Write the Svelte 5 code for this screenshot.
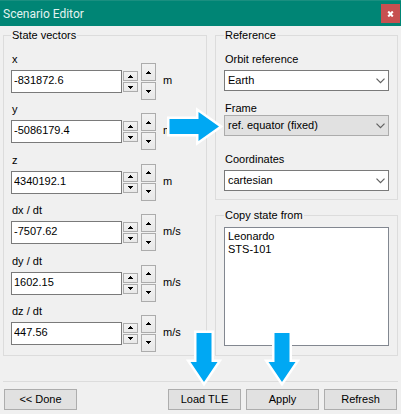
<script>
  let vectors = $state([
    { id: 'x', label: 'x', value: '-831872.6', unit: 'm' },
    { id: 'y', label: 'y', value: '-5086179.4', unit: 'm' },
    { id: 'z', label: 'z', value: '4340192.1', unit: 'm' },
    { id: 'dx', label: 'dx / dt', value: '-7507.62', unit: 'm/s' },
    { id: 'dy', label: 'dy / dt', value: '1602.15', unit: 'm/s' },
    { id: 'dz', label: 'dz / dt', value: '447.56', unit: 'm/s' }
  ]);

  const references = [
    { id: 'orbit', label: 'Orbit reference', value: 'Earth' },
    { id: 'frame', label: 'Frame', value: 'ref. equator (fixed)', marked: true },
    { id: 'coords', label: 'Coordinates', value: 'cartesian' }
  ];

  const vessels = ['Leonardo', 'STS-101'];
</script>

{#snippet spinner(size, name)}
  <span class="spinner {size}">
    <button type="button" aria-label="Increase {name}">
      <svg width="5" height="3" viewBox="0 0 5 3" shape-rendering="crispEdges"><path d="M2 0h1v1h1v1h1v1H0V2h1V1h1z" /></svg>
    </button>
    <button type="button" aria-label="Decrease {name}">
      <svg width="5" height="3" viewBox="0 0 5 3" shape-rendering="crispEdges"><path d="M0 0h5v1H4v1H3v1H2V2H1V1H0z" /></svg>
    </button>
  </span>
{/snippet}

{#snippet downArrow()}
  <svg class="arrow down" width="40" height="58" viewBox="0 0 40 58" aria-hidden="true">
    <path d="M12.5 4h15v29h6L20 53 6.5 33h6z" />
  </svg>
{/snippet}

<div class="window">
  <header>
    <h1>Scenario Editor</h1>
    <button type="button" class="close" aria-label="Close">
      <svg width="7" height="6" viewBox="0 0 7 6"><path d="M1.2 0.5l4.6 5M5.8 0.5l-4.6 5" /></svg>
    </button>
  </header>

  <main>
    <fieldset>
      <legend>State vectors</legend>
      <div class="vectors">
        {#each vectors as v (v.id)}
          <div class="vector">
            <div class="entry">
              <label for={v.id}>{v.label}</label>
              <div class="pair">
                <input id={v.id} type="text" bind:value={v.value} />
                {@render spinner('small', v.label)}
              </div>
            </div>
            {@render spinner('large', v.label)}
            <span class="unit">{v.unit}</span>
          </div>
        {/each}
      </div>
    </fieldset>

    <div class="side">
      <fieldset>
        <legend>Reference</legend>
        <div class="fields">
          {#each references as r (r.id)}
            <div class="field" class:marked={r.marked}>
              <label for={r.id}>{r.label}</label>
              <div class="combo">
                <select id={r.id}><option>{r.value}</option></select>
                <svg class="chevron" width="9" height="6" viewBox="0 0 9 6"><path d="M0.5 0.7l4 4 4-4" /></svg>
                {#if r.marked}
                  <svg class="arrow right" width="58" height="40" viewBox="0 0 58 40" aria-hidden="true">
                    <path d="M4.500 13v15h29v7L54 20.500 33.500 6v7z" />
                  </svg>
                {/if}
              </div>
            </div>
          {/each}
        </div>
      </fieldset>

      <fieldset class="copy">
        <legend>Copy state from</legend>
        <select class="list" multiple size="2" aria-label="Copy state from">
          {#each vessels as vessel}
            <option>{vessel}</option>
          {/each}
        </select>
      </fieldset>
    </div>
  </main>

  <footer>
    <button type="button" class="push done">&lt;&lt; Done</button>
    <div class="slot">
      <button type="button" class="push">Load TLE</button>
      {@render downArrow()}
    </div>
    <div class="slot">
      <button type="button" class="push">Apply</button>
      {@render downArrow()}
    </div>
    <button type="button" class="push">Refresh</button>
  </footer>
</div>

<style>
  :global(body) {
    margin: 0;
    background: #f0f0f0;
  }

  .window,
  .window :is(button, input, select) {
    box-sizing: border-box;
    font-family: 'Liberation Sans', Arial, sans-serif;
    font-size: 11px;
    line-height: 13px;
    color: #000;
  }

  header {
    display: flex;
    align-items: center;
    justify-content: space-between;
    box-sizing: border-box;
    height: 26px;
    padding: 0 1px 0 3px;
    border-top: 1px solid #1a8f80;
    background: #008575;
  }

  h1 {
    margin: 0;
    font: 12px/16px Roboto, 'Open Sans', sans-serif;
    color: #e4f3f1;
  }

  .close {
    display: grid;
    place-items: center;
    width: 19px;
    height: 19px;
    padding: 0;
    border: 0;
    background: #c75050;
  }

  .close path {
    fill: none;
    stroke: #fff;
    stroke-width: 2;
  }

  main {
    display: grid;
    grid-template-columns: 204fr 183fr;
    gap: 8px;
    padding: 3px 3px 0;
  }

  fieldset {
    display: flex;
    flex-direction: column;
    min-width: 0;
    margin: 0;
    padding: 0 8px;
    border: 1px solid #dcdcdc;
  }

  main > fieldset {
    padding: 0 7px;
  }

  legend {
    padding: 0 1px;
  }

  label {
    display: block;
    height: 13px;
    padding-left: 1px;
    white-space: nowrap;
  }

  .vectors {
    flex: 1;
    display: flex;
    flex-direction: column;
    justify-content: space-between;
    gap: 3px;
    padding: 11px 0 3px;
  }

  .vector {
    display: flex;
    height: 47px;
  }

  .entry {
    flex: 0 1 127px;
    min-width: 0;
  }

  .pair {
    display: flex;
    align-items: center;
    gap: 1px;
    margin-top: 4px;
  }

  input {
    flex: 1;
    width: 0;
    min-width: 0;
    height: 23px;
    margin: 0;
    padding: 0 2px 3px;
    border: 1px solid #7a7a7a;
    border-radius: 0;
    background: #fff;
  }

  .spinner {
    display: flex;
    flex-direction: column;
    flex-shrink: 0;
    gap: 1px;
    width: 15px;
  }

  .spinner button {
    display: grid;
    place-items: center;
    width: 15px;
    height: 10px;
    padding: 0;
    border: 1px solid #acacac;
    background: linear-gradient(#f2f2f2, #e8e8e8);
  }

  .large {
    margin: 10px 7px 0 3px;
  }

  .large button {
    height: 18px;
  }

  .unit {
    margin-top: 21px;
  }

  .side {
    display: flex;
    flex-direction: column;
    gap: 9px;
    min-width: 0;
  }

  .fields {
    display: flex;
    flex-direction: column;
    gap: 11px;
    padding: 11px 0 8px;
  }

  .combo {
    position: relative;
    margin-top: 4px;
  }

  .combo select {
    display: block;
    width: 100%;
    height: 21px;
    margin: 0;
    padding: 0 18px 1px 3px;
    appearance: none;
    border: 1px solid #7a7a7a;
    border-radius: 0;
    background: #fff;
  }

  .marked {
    padding-bottom: 6px;
  }

  .marked .combo {
    margin-top: 0;
  }

  .marked select {
    border-color: #acacac;
    background: #e1e1e1;
  }

  .chevron {
    position: absolute;
    top: 8px;
    right: 4px;
    pointer-events: none;
  }

  .chevron path {
    fill: none;
    stroke: #606060;
    stroke-width: 1.2;
  }

  .list {
    display: block;
    width: 100%;
    height: 119px;
    margin: 5px 0 9px;
    padding: 2px 0;
    overflow: hidden;
    border: 1px solid #828790;
    border-radius: 0;
    background: #fff;
  }

  .list option {
    min-height: 13px;
    padding: 0 3px;
    line-height: 13px;
  }

  footer {
    display: flex;
    gap: 5px;
    margin: 25px 3px 4px;
    padding: 7px 1px 0;
    border-top: 1px solid #dcdcdc;
  }

  .push {
    display: block;
    width: 73px;
    height: 21px;
    padding: 0;
    border: 1px solid #adadad;
    background: #e1e1e1;
  }

  .done {
    margin-right: auto;
  }

  .slot {
    position: relative;
  }

  .arrow {
    position: absolute;
    pointer-events: none;
  }

  .arrow path {
    fill: #00a8f3;
    stroke: #fff;
    stroke-width: 5;
    paint-order: stroke;
  }

  .down {
    left: 16px;
    bottom: 23px;
  }

  .right {
    right: 166px;
    top: -9px;
  }
</style>
